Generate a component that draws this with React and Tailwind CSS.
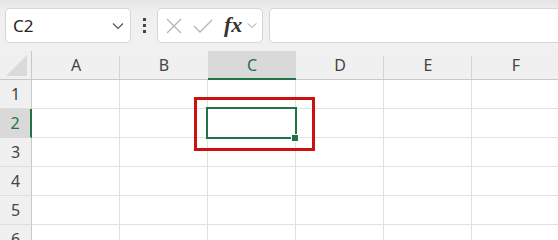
import React from "react";

const cols = ["A", "B", "C", "D", "E", "F"];
const rows = [1, 2, 3, 4, 5, 6];

const Chevron = ({ className = "" }) => (
  <svg viewBox="0 0 12 8" className={className} fill="none" stroke="currentColor" strokeWidth="1.2">
    <path d="M1 1.5 L6 6.5 L11 1.5" />
  </svg>
);

function FormulaBar() {
  return (
    <div className="h-[51px] flex items-center bg-linear-to-b from-[#e4e4e4] via-[#efefef] via-20% to-[#f1f1f1] overflow-hidden">
      {/* name box */}
      <div className="ml-[5px] w-[126px] h-[35px] bg-white border border-[#d6d6d6] rounded-[5px] flex items-center pl-[7px] pr-[6px] shrink-0">
        <span className="text-[17px] text-[#262626] flex-1 leading-none">C2</span>
        <Chevron className="w-[12px] h-[8px] text-[#555]" />
      </div>
      {/* dots */}
      <div className="w-[26px] flex flex-col items-center gap-[3px] shrink-0">
        <div className="w-[3px] h-[3px] bg-[#444]" />
        <div className="w-[3px] h-[3px] bg-[#444]" />
        <div className="w-[3px] h-[3px] bg-[#444]" />
      </div>
      {/* buttons */}
      <div className="w-[106px] h-[35px] bg-white border border-[#d6d6d6] rounded-[5px] flex items-center shrink-0">
        <svg viewBox="0 0 16 16" className="ml-[8px] w-[16px] h-[16px] text-[#b4b4b4]" fill="none" stroke="currentColor" strokeWidth="1.3">
          <path d="M1 1 L15 15 M15 1 L1 15" />
        </svg>
        <svg viewBox="0 0 20 14" className="ml-[11px] w-[20px] h-[14px] text-[#b4b4b4]" fill="none" stroke="currentColor" strokeWidth="1.3">
          <path d="M1 7 L7 13 L19 1" />
        </svg>
        <span
          className="ml-[11px] text-[22px] italic font-bold text-[#333] leading-none -mt-[2px]"
          style={{ fontFamily: '"Liberation Serif", "DejaVu Serif", serif' }}
        >
          fx
        </span>
        <Chevron className="ml-[5px] w-[10px] h-[7px] text-[#999]" />
      </div>
      {/* formula input */}
      <div className="ml-[6px] w-[320px] h-[35px] bg-white border border-[#d6d6d6] rounded-[5px] shrink-0" />
    </div>
  );
}

function Sheet() {
  return (
    <div className="relative">
      <div className="grid grid-cols-[32px_88px_88px_88px_88px_88px_88px] grid-rows-[29px_29px_29px_29px_29px_29px_29px]">
        {/* corner */}
        <div className="bg-[#f0f0f0] border-r border-b border-[#c8c8c8] flex items-end justify-end pr-[4px] pb-[3px]">
          <div className="w-[21px] h-[21px] bg-[#dadada] [clip-path:polygon(100%_0,100%_100%,0_100%)]" />
        </div>
        {cols.map((c) => (
          <div
            key={c}
            className={
              c === "C"
                ? "bg-[#d9d9d9] border-b-2 border-[#217346] flex items-center justify-center text-[16px] text-[#217346]"
                : "bg-[#f0f0f0] border-b border-[#c8c8c8] relative flex items-center justify-center text-[16px] text-[#444]"
            }
          >
            {c}
            {c !== "C" && c !== "B" && (
              <div className="absolute right-0 top-[5px] bottom-0 w-px bg-[#d4d4d4]" />
            )}
          </div>
        ))}
        {rows.map((r) => (
          <React.Fragment key={r}>
            <div
              className={
                r === 2
                  ? "bg-[#d9d9d9] border-r-2 border-b border-r-[#217346] border-b-[#d9d9d9] flex items-center justify-center text-[16px] text-[#217346]"
                  : "bg-[#f0f0f0] border-r border-b border-r-[#c8c8c8] border-b-[#dedede] flex items-center justify-center text-[16px] text-[#444]"
              }
            >
              {r}
            </div>
            {cols.map((c) => (
              <div key={c} className="bg-white border-r border-b border-[#e1e1e1]" />
            ))}
          </React.Fragment>
        ))}
      </div>
      {/* selection */}
      <div className="absolute left-[206px] top-[56px] w-[91px] h-[32px] border-2 border-[#217346]" />
      <div className="absolute left-[292px] top-[84px] w-[6px] h-[6px] bg-[#217346] border border-white box-content -m-px" />
      {/* annotation */}
      <div className="absolute left-[194px] top-[46px] w-[121px] h-[54px] border-[3px] border-[#cc1111]" />
    </div>
  );
}

export default function App() {
  return (
    <div
      className="w-[558px] h-[240px] overflow-hidden bg-white"
      style={{ fontFamily: '"Noto Sans", "Open Sans", sans-serif' }}
    >
      <FormulaBar />
      <Sheet />
    </div>
  );
}
